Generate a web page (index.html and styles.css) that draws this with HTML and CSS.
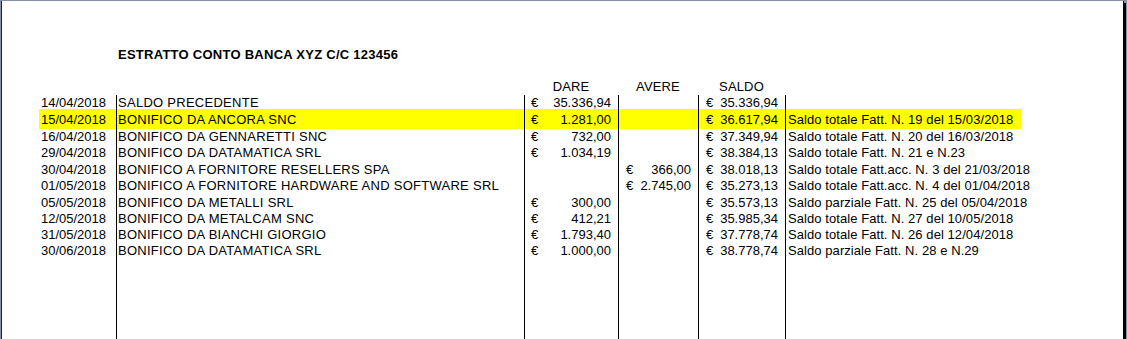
FILE: index.html
```html
<!DOCTYPE html>
<html lang="it">
<head>
<meta charset="utf-8">
<title>Estratto conto</title>
<link rel="stylesheet" href="styles.css">
</head>
<body>
<div class="page">
  <div class="sheet">
    <div class="title-row">
      <div class="c-date"></div>
      <div class="title">ESTRATTO CONTO BANCA XYZ C/C 123456</div>
    </div>
    <div class="head-row">
      <div class="c-date"></div>
      <div class="c-desc h"></div>
      <div class="c-dare h">DARE</div>
      <div class="c-avere h">AVERE</div>
      <div class="c-saldo h">SALDO</div>
      <div class="c-note h"></div>
    </div>

    <div class="row r14">
      <div class="cell c-date">14/04/2018</div>
      <div class="cell c-desc b">SALDO PRECEDENTE</div>
      <div class="cell c-dare b money"><span>€</span><span>35.336,94</span></div>
      <div class="cell c-avere b"></div>
      <div class="cell c-saldo b money"><span>€</span><span>35.336,94</span></div>
      <div class="cell c-note b"></div>
    </div>
    <div class="row r20 hl">
      <div class="cell c-date">15/04/2018</div>
      <div class="cell c-desc b">BONIFICO DA ANCORA SNC</div>
      <div class="cell c-dare b money"><span>€</span><span>1.281,00</span></div>
      <div class="cell c-avere b"></div>
      <div class="cell c-saldo b money"><span>€</span><span>36.617,94</span></div>
      <div class="cell c-note b">Saldo totale Fatt. N. 19 del 15/03/2018</div>
    </div>
    <div class="row r16">
      <div class="cell c-date">16/04/2018</div>
      <div class="cell c-desc b">BONIFICO DA GENNARETTI SNC</div>
      <div class="cell c-dare b money"><span>€</span><span>732,00</span></div>
      <div class="cell c-avere b"></div>
      <div class="cell c-saldo b money"><span>€</span><span>37.349,94</span></div>
      <div class="cell c-note b">Saldo totale Fatt. N. 20 del 16/03/2018</div>
    </div>
    <div class="row r17">
      <div class="cell c-date">29/04/2018</div>
      <div class="cell c-desc b">BONIFICO DA DATAMATICA SRL</div>
      <div class="cell c-dare b money"><span>€</span><span>1.034,19</span></div>
      <div class="cell c-avere b"></div>
      <div class="cell c-saldo b money"><span>€</span><span>38.384,13</span></div>
      <div class="cell c-note b">Saldo totale Fatt. N. 21 e N.23</div>
    </div>
    <div class="row r16">
      <div class="cell c-date">30/04/2018</div>
      <div class="cell c-desc b">BONIFICO A FORNITORE RESELLERS SPA</div>
      <div class="cell c-dare b"></div>
      <div class="cell c-avere b money"><span>€</span><span>366,00</span></div>
      <div class="cell c-saldo b money"><span>€</span><span>38.018,13</span></div>
      <div class="cell c-note b">Saldo totale Fatt.acc. N. 3 del 21/03/2018</div>
    </div>
    <div class="row r17">
      <div class="cell c-date">01/05/2018</div>
      <div class="cell c-desc b">BONIFICO A FORNITORE HARDWARE AND SOFTWARE SRL</div>
      <div class="cell c-dare b"></div>
      <div class="cell c-avere b money"><span>€</span><span>2.745,00</span></div>
      <div class="cell c-saldo b money"><span>€</span><span>35.273,13</span></div>
      <div class="cell c-note b">Saldo totale Fatt.acc. N. 4 del 01/04/2018</div>
    </div>
    <div class="row r16">
      <div class="cell c-date">05/05/2018</div>
      <div class="cell c-desc b">BONIFICO DA METALLI SRL</div>
      <div class="cell c-dare b money"><span>€</span><span>300,00</span></div>
      <div class="cell c-avere b"></div>
      <div class="cell c-saldo b money"><span>€</span><span>35.573,13</span></div>
      <div class="cell c-note b">Saldo parziale Fatt. N. 25 del 05/04/2018</div>
    </div>
    <div class="row r16">
      <div class="cell c-date">12/05/2018</div>
      <div class="cell c-desc b">BONIFICO DA METALCAM SNC</div>
      <div class="cell c-dare b money"><span>€</span><span>412,21</span></div>
      <div class="cell c-avere b"></div>
      <div class="cell c-saldo b money"><span>€</span><span>35.985,34</span></div>
      <div class="cell c-note b">Saldo totale Fatt. N. 27 del 10/05/2018</div>
    </div>
    <div class="row r16">
      <div class="cell c-date">31/05/2018</div>
      <div class="cell c-desc b">BONIFICO DA BIANCHI GIORGIO</div>
      <div class="cell c-dare b money"><span>€</span><span>1.793,40</span></div>
      <div class="cell c-avere b"></div>
      <div class="cell c-saldo b money"><span>€</span><span>37.778,74</span></div>
      <div class="cell c-note b">Saldo totale Fatt. N. 26 del 12/04/2018</div>
    </div>
    <div class="row r16">
      <div class="cell c-date">30/06/2018</div>
      <div class="cell c-desc b">BONIFICO DA DATAMATICA SRL</div>
      <div class="cell c-dare b money"><span>€</span><span>1.000,00</span></div>
      <div class="cell c-avere b"></div>
      <div class="cell c-saldo b money"><span>€</span><span>38.778,74</span></div>
      <div class="cell c-note b">Saldo parziale Fatt. N. 28 e N.29</div>
    </div>
    <div class="row filler">
      <div class="cell c-date"></div>
      <div class="cell c-desc b"></div>
      <div class="cell c-dare b"></div>
      <div class="cell c-avere b"></div>
      <div class="cell c-saldo b"></div>
      <div class="cell c-note b"></div>
    </div>
  </div>
</div>
</body>
</html>
```
FILE: styles.css
```css
html, body {
  margin: 0;
  padding: 0;
  height: 100%;
  overflow: hidden;
}
body {
  background: #8891a8;
  font-family: "Liberation Sans", Arial, sans-serif;
  font-size: 13px;
  line-height: 15px;
  color: #000;
}
.page {
  box-sizing: border-box;
  margin: 1px 0 0 1px;
  width: 1123px;
  height: calc(100vh - 1px);
  background: #fff;
  border-left: 1px solid #1c2030;
  border-right: 1px solid #000;
  box-shadow: 2px 2px 0 #000;
  display: flex;
  flex-direction: column;
}
.sheet {
  flex: 1;
  display: flex;
  flex-direction: column;
  margin-left: 37px;
}
.title-row {
  display: flex;
  margin-top: 46px;
  height: 32px;
}
.title {
  font-weight: bold;
  padding-left: 2px;
  letter-spacing: 0.26px;
}
.head-row {
  display: flex;
  height: 16px;
}
.h {
  text-align: center;
  letter-spacing: 0.15px;
}
.row {
  display: flex;
}
.r14 { height: 14px; }
.r16 { height: 16px; }
.r17 { height: 17px; }
.r20 { height: 20px; }
.r20 .cell { padding-top: 3px; }
.filler { flex: 1; }
.hl .cell { background: #ffff00; }
.cell {
  box-sizing: border-box;
  white-space: nowrap;
}
.b { border-left: 1px solid #000; }
.c-date {
  box-sizing: border-box;
  width: 77px;
  flex: none;
  text-align: right;
  padding-right: 10px;
}
.c-desc {
  box-sizing: border-box;
  width: 408px;
  flex: none;
  padding-left: 1px;
}
.row .c-desc {
  letter-spacing: 0.27px;
}
.c-dare {
  box-sizing: border-box;
  width: 94px;
  flex: none;
}
.c-avere {
  box-sizing: border-box;
  width: 80px;
  flex: none;
}
.c-saldo {
  box-sizing: border-box;
  width: 87px;
  flex: none;
}
.c-note {
  box-sizing: border-box;
  width: 236px;
  flex: none;
  padding-left: 2px;
}
.row .c-note {
  letter-spacing: 0.07px;
}
.money {
  display: flex;
  justify-content: space-between;
  padding-left: 6px;
  padding-right: 7px;
}
.c-avere.money, .c-saldo.money {
  padding-left: 7px;
}
.head-row .c-date { padding: 0; }
.title-row .c-date { padding: 0; }
```
